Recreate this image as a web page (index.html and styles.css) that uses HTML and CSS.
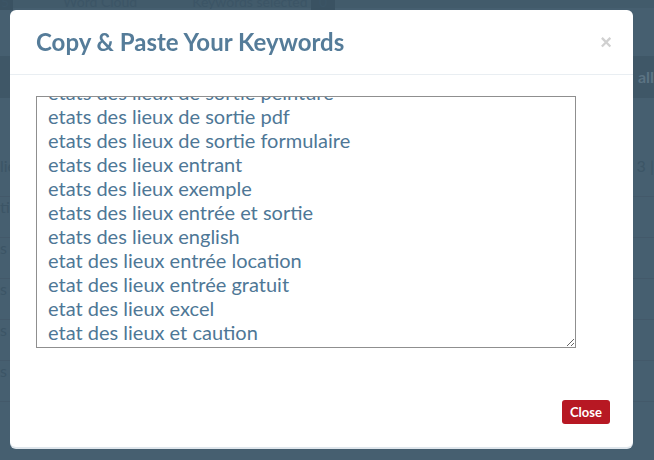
FILE: index.html
```html
<!DOCTYPE html>
<html lang="fr">
<head>
  <meta charset="UTF-8">
  <meta name="viewport" content="width=device-width, initial-scale=1.0">
  <title>Keywords</title>
  <link rel="stylesheet" href="styles.css">
</head>
<body>
  <div id="page">
    <div id="top-bar">
      <span class="count">5</span>
      <span class="tab">Word Cloud</span>
      <span class="tab">Keywords selected <span class="badge">0</span></span>
    </div>
    <div id="tool-bar">
      <span class="tool-btn">all</span>
    </div>
    <div id="rows">
      <div class="row"><span>lieux</span><span>3 |</span></div>
      <div class="row"><span>tion</span><span></span></div>
      <div class="row"><span>s de</span><span></span></div>
      <div class="row"><span>s de</span><span></span></div>
      <div class="row"><span>s de</span><span></span></div>
      <div class="row"><span>s de</span><span></span></div>
    </div>
  </div>

  <div id="overlay">
    <div id="modal">
      <div class="modal-header">
        <h3 class="modal-title">Copy &amp; Paste Your Keywords</h3>
        <button class="close-x">&times;</button>
      </div>
      <div class="modal-body">
        <textarea id="keywords" spellcheck="false">etats des lieux de sortie
etats des lieux de sortie peinture
etats des lieux de sortie pdf
etats des lieux de sortie formulaire
etats des lieux entrant
etats des lieux exemple
etats des lieux entrée et sortie
etats des lieux english
etat des lieux entrée location
etat des lieux entrée gratuit
etat des lieux excel
etat des lieux et caution
etat des lieux et assurance
etat des lieux et travaux</textarea>
      </div>
      <div class="modal-footer">
        <button class="btn-close">Close</button>
      </div>
    </div>
  </div>

  <script>
    const keywords = document.getElementById('keywords');
    keywords.scrollTop = 41; // same scroll as the copied list
  </script>
</body>
</html>
```

FILE: styles.css
```css
body {
  margin: 0;
  padding: 0;
  background-color: #465f70;
  font-family: Lato, "Liberation Sans", sans-serif;
  width: 654px;
  height: 460px;
  overflow: hidden;
}
#page {
  color: #3c5566;
}
#top-bar {
  display: flex;
  align-items: center;
  height: 14px;
  margin-top: -6px;
  font-size: 14px;
  background-color: #425b6b;
}
#top-bar .count {
  width: 12px;
  padding-left: 1px;
  background-color: #3a5262;
}
#top-bar .tab {
  margin-left: 50px;
}
#top-bar .tab + .tab {
  margin-left: 55px;
}
.badge {
  display: inline-block;
  padding: 0 8px;
  background-color: #3a5262;
}
#tool-bar {
  display: flex;
  justify-content: flex-end;
  margin-top: 48px;
  height: 42px;
  background-color: #3f5767;
}
.tool-btn {
  padding: 11px 0 0 0;
  font-size: 16px;
  font-weight: 700;
  color: #5b7383;
}
#rows {
  margin-top: 58px;
}
.row {
  display: flex;
  justify-content: space-between;
  height: 40px;
  font-size: 16px;
  border-bottom: 1px solid #43596a;
}

#overlay {
  position: fixed;
  inset: 0;
}
#modal {
  position: absolute;
  left: 10px;
  top: 10px;
  width: 623px;
  height: 437px;
  box-sizing: border-box;
  background-color: #fff;
  border-radius: 6px;
  box-shadow: 0 2px 0 #dfe6ec;
  display: flex;
  flex-direction: column;
}
.modal-header {
  display: flex;
  align-items: center;
  justify-content: space-between;
  padding: 19px 21px 19px 26px;
  border-bottom: 1px solid #e9eef2;
}
.modal-title {
  margin: 0;
  font-size: 24px;
  line-height: 26px;
  font-weight: 700;
  color: #557c99;
}
.close-x {
  border: none;
  background: none;
  padding: 0;
  font-family: "Liberation Sans", sans-serif;
  font-size: 20px;
  font-weight: 700;
  line-height: 20px;
  color: #d0d0d0;
  cursor: pointer;
}
.modal-body {
  padding: 21px 26px 32px;
}
#keywords {
  display: block;
  width: 540px;
  height: 252px;
  box-sizing: border-box;
  margin: 0;
  padding: 0 10px 0 11px;
  border: 1px solid #8f8f8f;
  font-family: Lato, "Liberation Sans", sans-serif;
  font-size: 20px;
  line-height: 24px;
  color: #4e7796;
  resize: both;
  outline: none;
  scrollbar-width: none;
}
#keywords::-webkit-scrollbar {
  display: none;
}
.modal-footer {
  display: flex;
  justify-content: flex-end;
  padding: 20px 23px 23px;
}
.btn-close {
  width: 48px;
  height: 24px;
  padding: 0;
  border: none;
  border-radius: 3px;
  background-color: #b71823;
  color: #fff;
  font-family: Lato, "Liberation Sans", sans-serif;
  font-size: 13px;
  font-weight: 700;
  cursor: pointer;
}
```
